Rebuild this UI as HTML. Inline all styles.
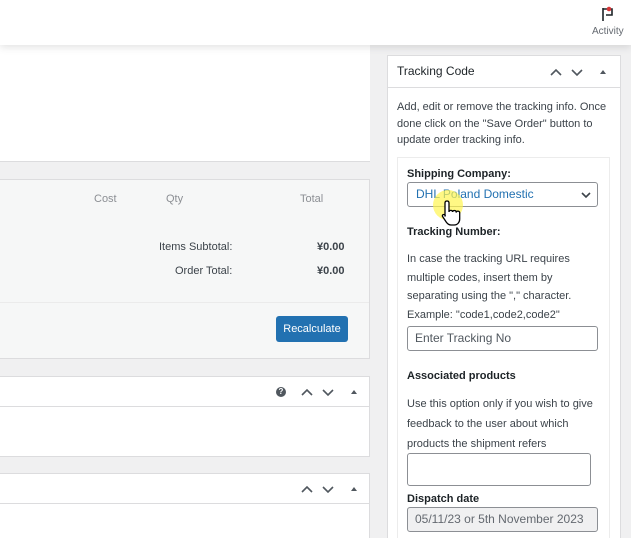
<!DOCTYPE html>
<html><head><style>
*{margin:0;padding:0;box-sizing:border-box}
html,body{width:631px;height:538px;overflow:hidden}
body{background:#f0f0f1;font-family:"Liberation Sans","DejaVu Sans",sans-serif;color:#3c434a;position:relative}
.a{position:absolute}
.t{font-size:11px;white-space:nowrap}
</style></head><body>
<div class="a" style="left:0;top:45px;width:370px;height:117px;background:#fff;border-bottom:1px solid #dcdcde"></div>
<div class="a" style="left:0;top:179px;width:370px;height:180px;background:#f6f7f7;border:1px solid #dcdcde;border-left:none"></div>
<div class="a" style="left:0;top:302px;width:369px;height:1px;background:#ebebeb"></div>
<div class="a t" style="left:94px;top:193px;color:#8c8f94">Cost</div>
<div class="a t" style="left:166px;top:193px;color:#8c8f94">Qty</div>
<div class="a t" style="left:300px;top:193px;color:#8c8f94">Total</div>
<div class="a t" style="left:159px;top:241px">Items Subtotal:</div>
<div class="a t" style="left:175px;top:265px">Order Total:</div>
<div class="a t" style="left:317px;top:241px;font-weight:bold">¥0.00</div>
<div class="a t" style="left:317px;top:265px;font-weight:bold">¥0.00</div>
<div class="a" style="left:276px;top:316px;width:72px;height:26px;background:#2271b1;border-radius:3px;color:#fff;font-size:11px;line-height:26px;text-align:center">Recalculate</div>
<div class="a" style="left:0;top:376px;width:370px;height:81px;background:#fff;border:1px solid #dcdcde;border-left:none"></div>
<div class="a" style="left:0;top:406px;width:370px;height:1px;background:#dcdcde"></div>
<div class="a" style="left:276px;top:387px;width:10px;height:10px;border-radius:50%;background:#50575e;color:#fff;font-size:8px;line-height:10px;text-align:center;font-weight:bold">?</div>
<svg class="a" style="left:300px;top:385px" width="60" height="14"><path d="M2 10l5-5 5 5M23 5l5 5 5-5" fill="none" stroke="#50575e" stroke-width="1.6"/><path d="M51 9l3-4 3 4z" fill="#50575e"/></svg>
<div class="a" style="left:0;top:473px;width:370px;height:70px;background:#fff;border:1px solid #dcdcde;border-left:none"></div>
<div class="a" style="left:0;top:503px;width:370px;height:1px;background:#dcdcde"></div>
<svg class="a" style="left:300px;top:482px" width="60" height="14"><path d="M2 10l5-5 5 5M23 5l5 5 5-5" fill="none" stroke="#50575e" stroke-width="1.6"/><path d="M51 9l3-4 3 4z" fill="#50575e"/></svg>

<div class="a" style="left:387px;top:55px;width:234px;height:490px;background:#fff;border:1px solid #dcdcde"></div>
<div class="a" style="left:388px;top:87px;width:232px;height:1px;background:#dcdcde"></div>
<div class="a" style="left:397px;top:64px;font-size:12px;color:#1d2327">Tracking Code</div>
<svg class="a" style="left:549px;top:65px" width="60" height="14"><path d="M2 10l5-5 5 5M23 5l5 5 5-5" fill="none" stroke="#50575e" stroke-width="1.6"/><path d="M51 9l3-4 3 4z" fill="#50575e"/></svg>
<div class="a" style="left:397px;top:99px;width:215px;font-size:11px;line-height:16.5px">Add, edit or remove the tracking info. Once done click on the "Save Order" button to update order tracking info.</div>
<div class="a" style="left:397px;top:157px;width:213px;height:390px;border:1px solid #ececec"></div>
<div class="a t" style="left:407px;top:168px;font-weight:bold;color:#1d2327">Shipping Company:</div>
<div class="a" style="left:407px;top:182px;width:191px;height:25px;border:1px solid #8c8f94;border-radius:3px;color:#2271b1;font-size:12px;line-height:23px;padding-left:8px">DHL Poland Domestic</div>
<svg class="a" style="left:580px;top:191px" width="12" height="8"><path d="M2 2l4 4 4-4" fill="none" stroke="#3c434a" stroke-width="1.6"/></svg>
<div class="a" style="left:433px;top:190px;width:30px;height:30px;border-radius:50%;background:rgba(255,245,80,.7)"></div>
<svg class="a" style="left:441px;top:199px" width="22" height="28" viewBox="0 0 22 28"><path d="M6 2c1.2 0 2 .8 2 2v9c0-1 .8-1.6 1.8-1.6S11.6 12 11.6 13v0c0-1 .8-1.5 1.8-1.5s1.8.6 1.8 1.6v.5c0-1 .8-1.5 1.7-1.5s1.8.6 1.8 1.6V20c0 3-2 6-5.5 6H10c-2.3 0-3.6-1.3-4.8-3L1.6 17.5c-.6-1 .1-2 1.1-2 .6 0 1.1.3 1.5.8L4 17.5V4c0-1.2.8-2 2-2z" fill="#fff" stroke="#000" stroke-width="1.3"/></svg>
<div class="a t" style="left:407px;top:226px;font-weight:bold;color:#1d2327">Tracking Number:</div>
<div class="a" style="left:407px;top:250px;width:188px;font-size:11px;line-height:18.5px">In case the tracking URL requires multiple codes, insert them by separating using the "," character. Example: "code1,code2,code2"</div>
<div class="a" style="left:407px;top:326px;width:191px;height:25px;border:1px solid #8c8f94;border-radius:3px;font-size:12px;line-height:23px;padding-left:7px;color:#50575e">Enter Tracking No</div>
<div class="a t" style="left:407px;top:370px;font-weight:bold;color:#1d2327">Associated products</div>
<div class="a" style="left:407px;top:394px;width:205px;font-size:11px;line-height:20px">Use this option only if you wish to give feedback to the user about which products the shipment refers</div>
<div class="a" style="left:407px;top:453px;width:184px;height:33px;border:1px solid #8c8f94;border-radius:3px"></div>
<div class="a t" style="left:407px;top:493px;font-weight:bold;color:#1d2327">Dispatch date</div>
<div class="a" style="left:407px;top:507px;width:191px;height:25px;border:1px solid #8c8f94;border-radius:3px;background:#f0f0f1;font-size:12px;line-height:23px;padding-left:7px;color:#646970">05/11/23 or 5th November 2023</div>

<div class="a" style="left:0;top:0;width:631px;height:45px;background:#fff;box-shadow:0 2px 8px rgba(0,0,0,.12)"></div>
<svg class="a" style="left:600px;top:5px" width="16" height="18" viewBox="0 0 16 18"><path d="M3 3v13M3 4h9v6H6" fill="none" stroke="#1d2327" stroke-width="1.6"/><circle cx="9" cy="4" r="2.3" fill="#d63638"/></svg>
<div class="a" style="left:592px;top:26px;font-size:10px;color:#646970">Activity</div>
</body></html>
